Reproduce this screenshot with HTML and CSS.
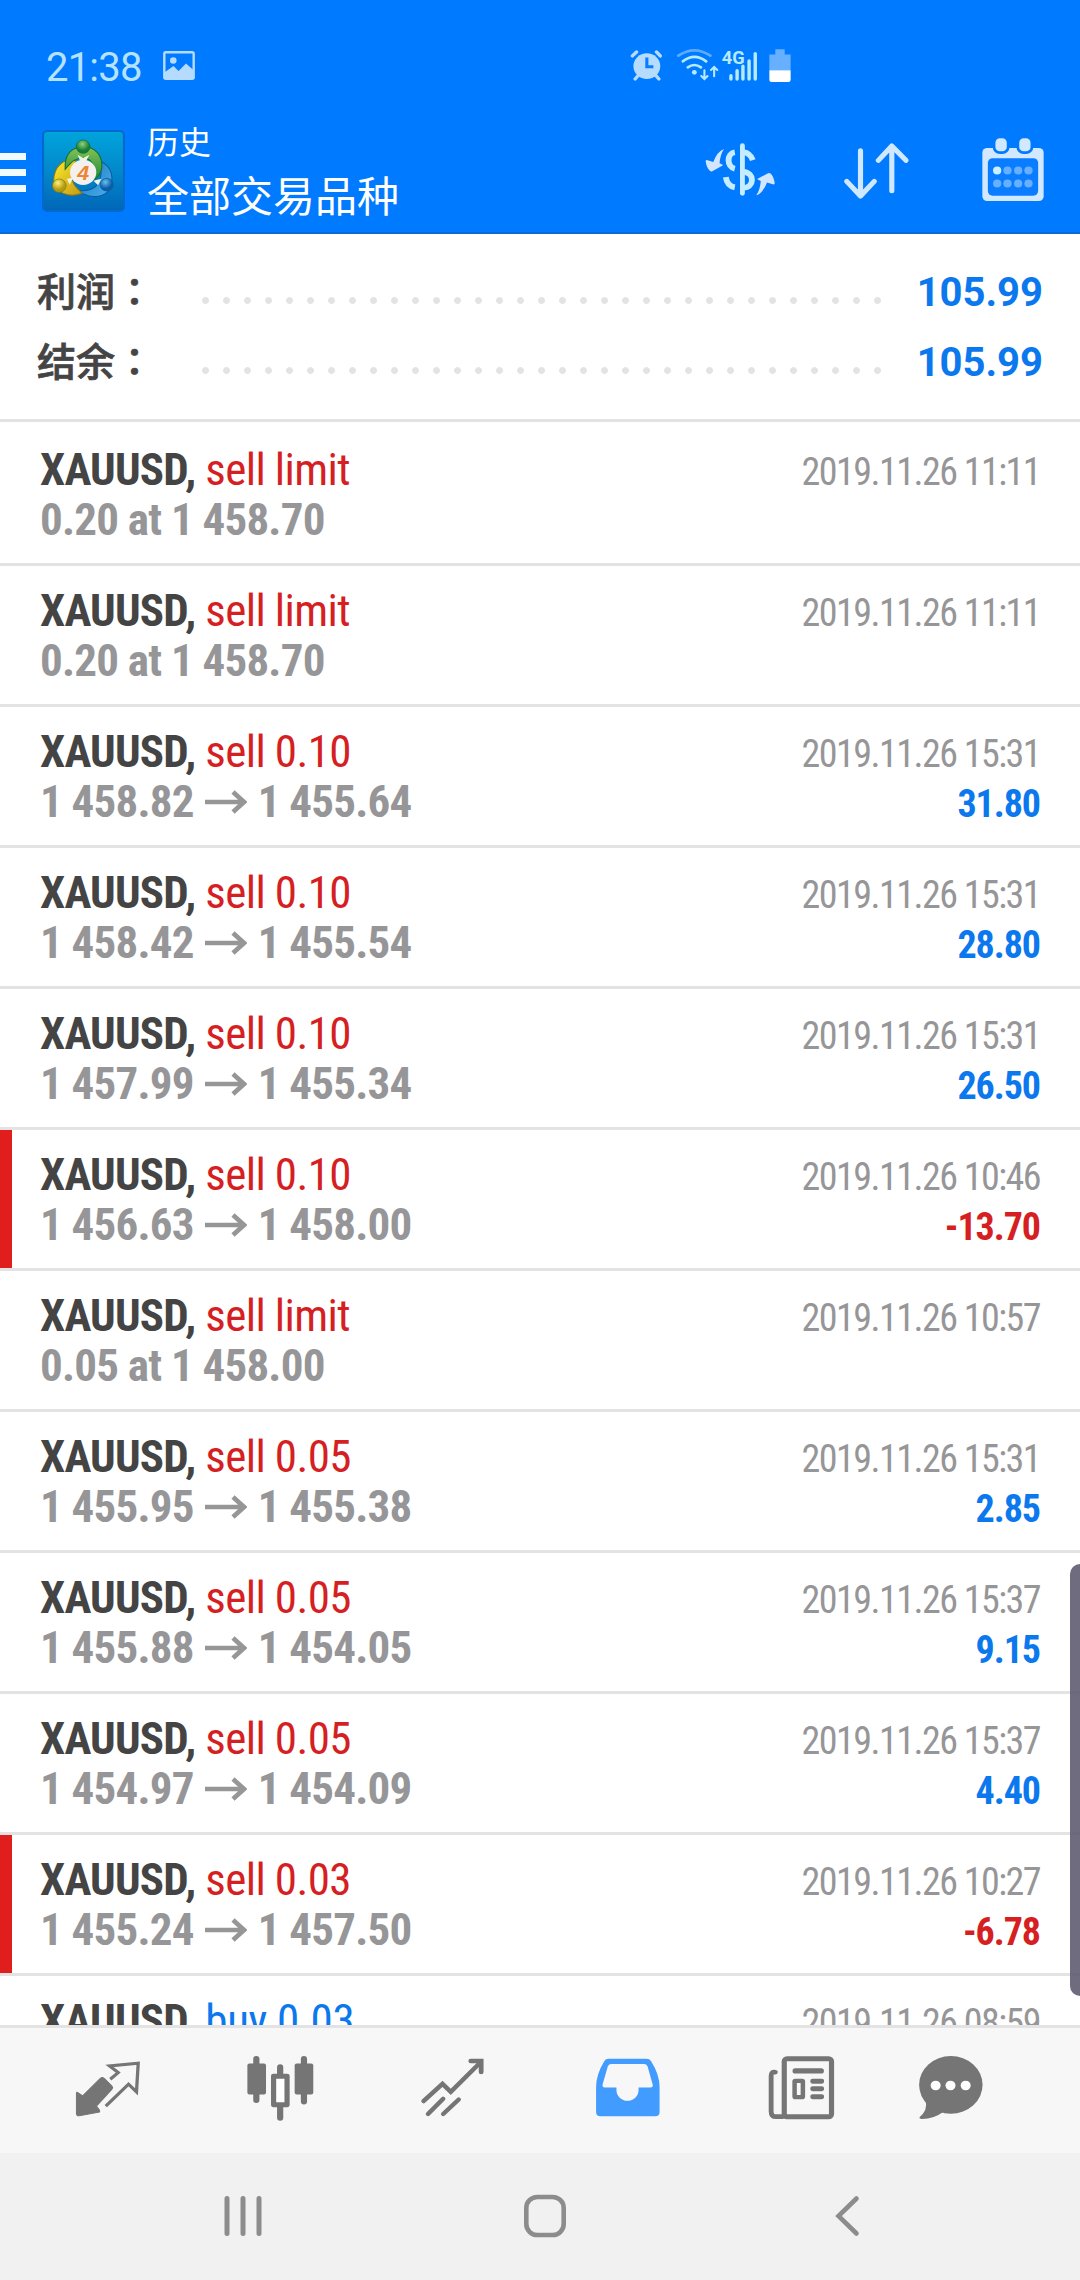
FILE: index.html
```html
<!DOCTYPE html>
<html lang="zh-CN">
<head>
<meta charset="utf-8">
<title>历史</title>
<link rel="stylesheet" href="styles.css">
</head>
<body>
<div class="screen">
  <header class="header">
    <div class="status">
      <span class="clock">21:38</span>
      <svg class="ic-photo" viewBox="0 0 32 29" width="32" height="29"><rect x="1.3" y="1.2" width="29.4" height="26.6" rx="1.5" fill="none" stroke="#b5dbff" stroke-width="2.4"/><circle cx="10.3" cy="9.5" r="3.3" fill="#b5dbff"/><path d="M2 21 10.500 15 15.500 20 23 12.500 31 19.500V28H2Z" fill="#b5dbff"/></svg>
      <div class="status-icons">
        <svg class="ic-alarm" viewBox="262 146 96 97" preserveAspectRatio="none" width="33" height="32"><g stroke="#b5dbff" stroke-width="10" stroke-linecap="round"><path d="M269 167 281 155M350 167 339 155"/><path d="M287 225 277 237M336 225 346 237"/></g><circle cx="311" cy="198" r="39" fill="#b5dbff"/><path d="M311 172V200H330" fill="none" stroke="#0a7cff" stroke-width="9"/></svg>
        <svg class="ic-wifi" viewBox="398 144 121 99" preserveAspectRatio="none" width="42" height="33"><g fill="none" stroke="#b5eaff" stroke-width="8" stroke-linecap="round"><path d="M402 167Q448 135 494 167" stroke="#5cabff"/><path d="M415 184Q448 157 482 184"/><path d="M429 202Q448 188 467 202"/><path d="M477 211V236M468 228 477 237 486 228M505 229V201M496 210 505 201 514 210" stroke-width="6"/></g><circle cx="448" cy="217" r="7" fill="#b5eaff"/></svg>
        <svg class="ic-signal" viewBox="524 146 108 97" preserveAspectRatio="none" width="37" height="32"><text class="net" x="526" y="190" textLength="67" lengthAdjust="spacingAndGlyphs">4G</text><path d="M553 227V237M571 212V237M588 198V237M606 182V237M624 160V237" stroke="#b5eaff" stroke-width="10" stroke-linecap="round"/></svg>
        <svg class="ic-battery" viewBox="664 147 63 98" preserveAspectRatio="none" width="22" height="33"><path d="M665 163H682V148H709V163H726V210H665Z" fill="#66b0ff"/><path d="M665 210H726V238Q726 245 720 245H671Q665 245 665 238Z" fill="#fff"/></svg>
      </div>
    </div>
    <div class="toolbar">
      <svg class="ic-menu" viewBox="0 0 26 39" width="26" height="39"><path d="M0 3.500H26M0 19.500H26M0 35.500H26" stroke="#f0faff" stroke-width="7"/></svg>
      <svg class="logo" viewBox="0 0 240 246" preserveAspectRatio="none" width="83" height="82">
        <defs>
          <linearGradient id="bg" x1="0" y1="0" x2="0" y2="1"><stop offset="0" stop-color="#00a4dd"/><stop offset=".5" stop-color="#0388cb"/><stop offset="1" stop-color="#0066b8"/></linearGradient>
          <linearGradient id="gr" x1="0" y1="0" x2="0" y2="1"><stop offset="0" stop-color="#86c456"/><stop offset="1" stop-color="#1d8a3c"/></linearGradient>
          <linearGradient id="ye" x1="0" y1="0" x2="1" y2="1"><stop offset="0" stop-color="#fbea2c"/><stop offset="1" stop-color="#c59a14"/></linearGradient>
          <linearGradient id="bl" x1="0" y1="0" x2="1" y2="1"><stop offset="0" stop-color="#1b72bb"/><stop offset="1" stop-color="#48b2ee"/></linearGradient>
          <radialGradient id="gh" cx=".45" cy=".3"><stop offset="0" stop-color="#8fd27c"/><stop offset="1" stop-color="#167d34"/></radialGradient>
          <radialGradient id="yh" cx=".4" cy=".3"><stop offset="0" stop-color="#fff17a"/><stop offset="1" stop-color="#b39a10"/></radialGradient>
          <radialGradient id="bh" cx=".4" cy=".3"><stop offset="0" stop-color="#69c0f0"/><stop offset="1" stop-color="#0b5ea6"/></radialGradient>
        </defs>
        <rect x="3" y="3" width="234" height="240" rx="12" fill="url(#bg)" stroke="#0568cc" stroke-width="6"/>
        <path d="M165 92C205 106 212 152 190 185C172 206 128 204 106 182C128 184 150 178 158 166C172 150 175 120 165 92Z" fill="url(#bl)" stroke="#0b5a9e" stroke-width="3"/>
        <path d="M98 92C62 82 34 112 34 150C34 186 76 206 116 190C104 176 90 168 88 150C86 130 90 112 98 92Z" fill="url(#ye)" stroke="#8a7610" stroke-width="3"/>
        <path d="M67 118C64 74 86 50 119 50C154 50 176 76 173 116C168 134 162 142 152 148C154 112 146 84 119 84C98 84 88 92 67 118Z" fill="url(#gr)" stroke="#166c30" stroke-width="3"/>
        <path d="M103 74 119 84 137 74 128 92H110ZM72 146 90 143 80 164ZM149 152 172 146 162 166Z" fill="#eef3df"/>
        <circle cx="119" cy="50" r="20" fill="url(#gh)" stroke="#166c30" stroke-width="2"/>
        <circle cx="50" cy="167" r="20" fill="url(#yh)" stroke="#8a7610" stroke-width="2"/>
        <circle cx="187" cy="164" r="19" fill="url(#bh)" stroke="#0b5a9e" stroke-width="2"/>
        <circle cx="119" cy="127" r="38" fill="#f4f0ee"/>
        <text class="logo-num" x="119" y="149" text-anchor="middle">4</text>
      </svg>
      <div class="titles"><div class="title">历史</div><div class="subtitle">全部交易品种</div></div>
      <div class="actions">
        <svg viewBox="480 428 202 160" preserveAspectRatio="none" width="70" height="53">
          <path id="turn" d="M535 446Q515 454 504 485L485 479Q481 479 482 484Q485 504 494 512Q497 515 501 513L531 496Q533 493 529 493L522 489Q524 462 535 446Z" fill="#d2e7ff"/>
          <use href="#turn" transform="rotate(180 581.500 516)"/>
          <path d="M588 436V580" stroke="#c5ecff" stroke-width="14" stroke-linecap="round"/>
          <g fill="none" stroke="#c5ecff" stroke-width="17"><path d="M566 456C542 460 542 500 566 506M540 531Q544 558 566 562"/><path d="M590 455Q611 458 618 480M590 515C624 517 624 562 590 563"/></g>
        </svg>
        <svg viewBox="882 428 189 168" preserveAspectRatio="none" width="65" height="56"><g fill="none" stroke="#cfe8ff" stroke-width="15" stroke-linecap="round" stroke-linejoin="round"><path d="M930 451V587M890 543 930 587 970 543M1021 571V437M982 480 1021 437 1062 480"/></g></svg>
        <svg viewBox="1282 414 180 190" preserveAspectRatio="none" width="62" height="63"><rect x="1283" y="444" width="178" height="160" rx="14" fill="#d2e8ff"/><rect x="1299" y="475" width="146" height="113" rx="14" fill="#0a7cff"/><g fill="#d2e8ff" stroke="#007aff" stroke-width="8"><rect x="1317" y="411" width="41" height="47" rx="17"/><rect x="1386" y="411" width="41" height="47" rx="17"/></g><g fill="#66b0ff"><circle cx="1326" cy="512" r="12" fill="#c8f0ff"/><circle cx="1356" cy="512" r="12"/><circle cx="1387" cy="512" r="12"/><circle cx="1417" cy="512" r="12"/><circle cx="1326" cy="551" r="12"/><circle cx="1356" cy="551" r="12"/><circle cx="1387" cy="551" r="12"/><circle cx="1417" cy="551" r="12"/></g></svg>
      </div>
    </div>
  </header>

  <section class="summary">
    <div class="sum-row"><span class="label">利润<span class="colon" lang="zh-TW">：</span></span><span class="dots"></span><span class="total">105.99</span></div>
    <div class="sum-row"><span class="label">结余<span class="colon" lang="zh-TW">：</span></span><span class="dots"></span><span class="total">105.99</span></div>
  </section>

  <svg class="defs" width="0" height="0"><symbol id="arrow" viewBox="0 0 42 24"><path d="M0 12H39M28 2 39 12 28 22" fill="none" stroke="#969696" stroke-width="4.600"/></symbol></svg>

  <main class="list">
    <div class="deal"><div class="info"><div><b>XAUUSD,</b> <span class="sell">sell limit</span></div><div class="price">0.20 at 1 458.70</div></div><div class="side"><div class="date">2019.11.26 11:11</div></div></div>
    <div class="deal"><div class="info"><div><b>XAUUSD,</b> <span class="sell">sell limit</span></div><div class="price">0.20 at 1 458.70</div></div><div class="side"><div class="date">2019.11.26 11:11</div></div></div>
    <div class="deal"><div class="info"><div><b>XAUUSD,</b> <span class="sell">sell 0.10</span></div><div class="price">1 458.82<svg class="arrow"><use href="#arrow"/></svg>1 455.64</div></div><div class="side"><div class="date">2019.11.26 15:31</div><div class="profit">31.80</div></div></div>
    <div class="deal"><div class="info"><div><b>XAUUSD,</b> <span class="sell">sell 0.10</span></div><div class="price">1 458.42<svg class="arrow"><use href="#arrow"/></svg>1 455.54</div></div><div class="side"><div class="date">2019.11.26 15:31</div><div class="profit">28.80</div></div></div>
    <div class="deal"><div class="info"><div><b>XAUUSD,</b> <span class="sell">sell 0.10</span></div><div class="price">1 457.99<svg class="arrow"><use href="#arrow"/></svg>1 455.34</div></div><div class="side"><div class="date">2019.11.26 15:31</div><div class="profit">26.50</div></div></div>
    <div class="deal lost"><div class="info"><div><b>XAUUSD,</b> <span class="sell">sell 0.10</span></div><div class="price">1 456.63<svg class="arrow"><use href="#arrow"/></svg>1 458.00</div></div><div class="side"><div class="date">2019.11.26 10:46</div><div class="profit">-13.70</div></div></div>
    <div class="deal"><div class="info"><div><b>XAUUSD,</b> <span class="sell">sell limit</span></div><div class="price">0.05 at 1 458.00</div></div><div class="side"><div class="date">2019.11.26 10:57</div></div></div>
    <div class="deal"><div class="info"><div><b>XAUUSD,</b> <span class="sell">sell 0.05</span></div><div class="price">1 455.95<svg class="arrow"><use href="#arrow"/></svg>1 455.38</div></div><div class="side"><div class="date">2019.11.26 15:31</div><div class="profit">2.85</div></div></div>
    <div class="deal"><div class="info"><div><b>XAUUSD,</b> <span class="sell">sell 0.05</span></div><div class="price">1 455.88<svg class="arrow"><use href="#arrow"/></svg>1 454.05</div></div><div class="side"><div class="date">2019.11.26 15:37</div><div class="profit">9.15</div></div></div>
    <div class="deal"><div class="info"><div><b>XAUUSD,</b> <span class="sell">sell 0.05</span></div><div class="price">1 454.97<svg class="arrow"><use href="#arrow"/></svg>1 454.09</div></div><div class="side"><div class="date">2019.11.26 15:37</div><div class="profit">4.40</div></div></div>
    <div class="deal lost"><div class="info"><div><b>XAUUSD,</b> <span class="sell">sell 0.03</span></div><div class="price">1 455.24<svg class="arrow"><use href="#arrow"/></svg>1 457.50</div></div><div class="side"><div class="date">2019.11.26 10:27</div><div class="profit">-6.78</div></div></div>
    <div class="deal"><div class="info"><div><b>XAUUSD,</b> <span class="buy">buy 0.03</span></div></div><div class="side"><div class="date">2019.11.26 08:59</div></div></div>
  </main>

  <nav class="tabs">
    <svg viewBox="212 286 200 202" preserveAspectRatio="none" width="69" height="67"><path d="M224 398 240 409 292 356Q297 352 303 357L325 380Q329 384 325 389L280 440 289 453V458L230 469Q222 470 222 462V400Z" fill="#757575" stroke="#757575" stroke-width="3" stroke-linejoin="round"/><path d="M320 359 343 339 318 319 401 311 396 397 373 374 307 440" fill="none" stroke="#757575" stroke-width="9.500"/></svg>
    <svg viewBox="714 286 200 202" preserveAspectRatio="none" width="69" height="67"><path d="M744 298V422M882 298V426M813 323V350M813 440V475" stroke="#757575" stroke-width="18" stroke-linecap="round"/><rect x="718" y="312" width="54" height="93" rx="6" fill="#757575"/><rect x="855" y="312" width="54" height="93" rx="6" fill="#757575"/><rect x="794" y="350" width="39" height="86" fill="#fff" stroke="#757575" stroke-width="15" stroke-linejoin="round"/></svg>
    <svg viewBox="1216 286 200 202" preserveAspectRatio="none" width="69" height="67"><g fill="none" stroke="#757575" stroke-width="13" stroke-linecap="round"><path d="M1232 425 1287 373 1311 397 1396 309"/><path d="M1369 304H1399V337" stroke-width="14"/><path d="M1245 464 1289 418M1289 464 1334 420"/></g></svg>
    <svg viewBox="153 286 200 202" preserveAspectRatio="none" width="69" height="67"><path fill-rule="evenodd" fill="#429bff" d="M198 297H308Q317 297 321 304Q346 345 346 382V458Q346 471 333 471H175Q162 471 162 458V382Q162 345 186 304Q190 297 198 297ZM206 313Q199 313 196 320L181 374Q179 384 187 384H221V392A31 31 0 0 0 285 392V384H319Q328 384 326 375L311 320Q308 313 301 313Z"/></svg>
    <svg viewBox="660 286 200 202" preserveAspectRatio="none" width="69" height="67"><g fill="none" stroke="#757575"><rect x="710" y="297" width="137" height="175" rx="8" stroke-width="15"/><path d="M684 338Q672 335 672 349V456Q672 472 686 472H705" stroke-width="14" stroke-linecap="round"/><path d="M742 334H817" stroke-width="16" stroke-linecap="round"/><path d="M793 365H818M793 388H818M793 412H818" stroke-width="15" stroke-linecap="round"/><rect x="740" y="364" width="24" height="49" rx="2" stroke-width="13"/></g></svg>
    <svg viewBox="1093 286 200 202" preserveAspectRatio="none" width="69" height="67"><ellipse cx="1194" cy="376" rx="92" ry="87" fill="#757575"/><path d="M1121 425Q1128 452 1103 474Q1102 479 1109 479Q1142 480 1172 458Z" fill="#757575"/><g fill="#fff"><circle cx="1150" cy="378" r="14.500"/><circle cx="1193" cy="378" r="14.500"/><circle cx="1237" cy="378" r="14.500"/></g></svg>
  </nav>

  <nav class="sysnav">
    <svg viewBox="0 0 44 44" width="44" height="44"><path d="M6 4.500V39.500M22 4.500V39.500M38 4.500V39.500" stroke="#8c8c8c" stroke-width="5" stroke-linecap="round"/></svg>
    <svg viewBox="0 0 44 44" width="44" height="44"><rect x="3.300" y="3" width="37.400" height="38" rx="11" fill="none" stroke="#8c8c8c" stroke-width="4.600"/></svg>
    <svg viewBox="0 0 44 44" width="44" height="44"><path d="M31.500 4.500 13.500 22 31.500 39.500" fill="none" stroke="#8c8c8c" stroke-width="4.600" stroke-linecap="round"/></svg>
  </nav>

  <div class="edge-handle"></div>
</div>
</body>
</html>
```
FILE: styles.css
```css
* { box-sizing: border-box; }
body { margin: 0; background: #fff; }
svg { display: block; flex: none; }

.screen {
  position: relative;
  display: flex;
  flex-direction: column;
  width: 1080px;
  height: 2280px;
  overflow: hidden;
  font-family: Roboto, "Noto Sans CJK SC", sans-serif;
}

/* Status bar and toolbar */
.header {
  height: 234px;
  flex: none;
  background: #007aff;
  border-bottom: 2px solid #0a68da;
}
.status {
  display: flex;
  align-items: flex-start;
  height: 112px;
  padding: 49px 0 0 46px;
}
.clock { width: 117px; font-size: 40px; line-height: 37px; letter-spacing: -0.8px; color: #b5e2ff; }
.ic-photo { margin-top: 2px; }
.status-icons { display: flex; margin-left: 435px; }
.ic-wifi { margin-left: 14px; margin-top: -1px; }
.ic-signal { margin-left: 2px; overflow: visible; }
.ic-battery { margin-left: 11px; }
.net { font: 700 56px Roboto, sans-serif; fill: #b5eaff; }

.toolbar { display: flex; height: 120px; }
.ic-menu { margin: 41px 16px 0 0; }
.logo { margin-top: 18px; }
.logo-num { font: italic 700 62px "Liberation Sans", sans-serif; fill: #ee8434; }
.titles { margin-left: 22px; color: #fff; }
.title { margin-top: 9px; font-size: 32px; line-height: 44px; }
.subtitle { margin-top: 1px; font-size: 42px; line-height: 64px; }
.actions { display: flex; align-items: flex-start; margin-left: auto; padding: 31px 36px 0 0; gap: 73px; }
.actions svg:first-child { margin-right: -4px; }
.actions svg:last-child { margin-top: -5px; }

/* Totals */
.summary {
  flex: none;
  height: 188px;
  padding: 20px 37px 0 37px;
  border-bottom: 3px solid #e3e3e3;
}
.sum-row { display: flex; align-items: baseline; height: 70px; line-height: 70px; }
.label {
  width: 158px;
  font-family: "Noto Sans CJK SC", sans-serif;
  font-size: 39px;
  font-weight: 500;
  -webkit-text-stroke: 0.7px #444;
  color: #444;
}
.colon { font-family: "Noto Sans CJK TC", sans-serif; line-height: 1; }
.dots {
  width: 693px;
  height: 21px;
  align-self: flex-start;
  margin-top: 36px;
  background: radial-gradient(circle at 10.500px 10.500px, #e3e3e3 3px, transparent 3.800px) 0 0 / 21px 21px;
}
.total { margin-left: auto; font-size: 40px; font-weight: 700; color: #0c78ee; }

/* Deal list */
.list { flex: 1; min-height: 0; overflow: hidden; padding-top: 3px; font-family: "Roboto Condensed", Roboto, sans-serif; }
.deal {
  display: flex;
  justify-content: space-between;
  height: 141px;
  padding: 20px 40px 0 40px;
  border-bottom: 3px solid #e3e3e3;
  line-height: 50px;
}
.lost { background: linear-gradient(#e01e1e, #e01e1e) 0 0 / 12px 138px no-repeat; }
.info { font-size: 45px; letter-spacing: -0.600px; }
.info b { color: #444; font-weight: 700; letter-spacing: -0.800px; }
.sell { color: #d51f23; }
.buy { color: #0c78ee; letter-spacing: -0.300px; }
.price { display: flex; align-items: center; font-weight: 700; letter-spacing: -0.770px; color: #969698; }
.arrow { width: 42px; height: 24px; margin: 0 11px; }
.side { padding-top: 2px; font-size: 38px; text-align: right; }
.date { letter-spacing: -1.520px; color: #969698; }
.profit { font-weight: 700; letter-spacing: -1.050px; color: #0c78ee; }
.lost .profit { color: #d51f23; }

/* Bottom tabs */
.tabs {
  display: grid;
  grid-template-columns: 172.800px 172.800px 172.800px 175.800px 173px 125.200px;
  justify-items: center;
  flex: none;
  height: 128px;
  padding: 27px 0 0 21px;
  background: #f7f7f7;
  border-top: 3px solid #e3e3e3;
}
.sysnav {
  display: grid;
  grid-template-columns: repeat(3, 302px);
  justify-items: center;
  flex: none;
  height: 127px;
  padding: 41px 0 0 92px;
  background: #f1f1f1;
}

.edge-handle {
  position: absolute;
  top: 1564px;
  right: 0;
  width: 10px;
  height: 432px;
  border-radius: 12px 0 0 12px;
  background: rgba(92, 88, 110, 0.88);
}
```
